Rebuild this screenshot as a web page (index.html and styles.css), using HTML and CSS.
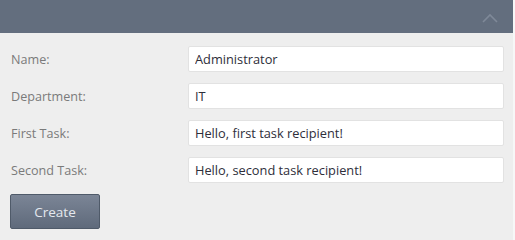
FILE: index.html
```html
<!DOCTYPE html>
<html lang="en">
<head>
    <meta charset="UTF-8">
    <title>New Employee</title>
    <link rel="stylesheet" href="styles.css">
</head>
<body>
    <div class="panel">
        <header class="panel-head">
            <svg class="collapse" width="16" height="10" viewBox="0 0 16 10">
                <path d="M1 9 L8 2 L15 9" fill="none" stroke="#7f8998" stroke-width="1.6"/>
            </svg>
        </header>
        <form class="form">
            <label class="lbl">Name:</label>
            <input class="field" type="text" value="Administrator">
            <label class="lbl">Department:</label>
            <input class="field" type="text" value="IT">
            <label class="lbl">First Task:</label>
            <input class="field" type="text" value="Hello, first task recipient!">
            <label class="lbl">Second Task:</label>
            <input class="field" type="text" value="Hello, second task recipient!">
            <div class="actions">
                <button type="button" class="btn">Create</button>
            </div>
        </form>
    </div>
</body>
</html>
```

FILE: styles.css
```css
body {
    margin: 0;
    background: #f7f7f7;
    font-family: "Open Sans", "Noto Sans", sans-serif;
}

.panel {
    width: 513px;
    height: 240px;
    background: #eeeeee;
}

.panel-head {
    height: 33px;
    background: #636e7e;
    display: flex;
    justify-content: flex-end;
    align-items: center;
    padding-right: 15px;
}

.collapse {
    margin-top: 2px;
}

.form {
    display: grid;
    grid-template-columns: 178px 1fr;
    row-gap: 11px;
    align-items: center;
    padding: 13px 9px 0 10px;
}

.lbl {
    font-size: 12.6px;
    color: #7a7a7a;
    padding-left: 1px;
}

.field {
    height: 26px;
    box-sizing: border-box;
    border: 1px solid #e2e2e2;
    border-radius: 2px;
    background: #fff;
    padding: 0 6px;
    font-family: inherit;
    font-size: 12.8px;
    color: #2e2e3a;
    outline: none;
}

.actions {
    grid-column: 1 / 3;
}

.btn {
    width: 90px;
    height: 35px;
    border: 1px solid #4f5a69;
    border-radius: 2px;
    background: linear-gradient(#7b8596, #5f6a7b);
    color: #e4e8ee;
    font-family: inherit;
    font-size: 13.5px;
    cursor: pointer;
}
```
